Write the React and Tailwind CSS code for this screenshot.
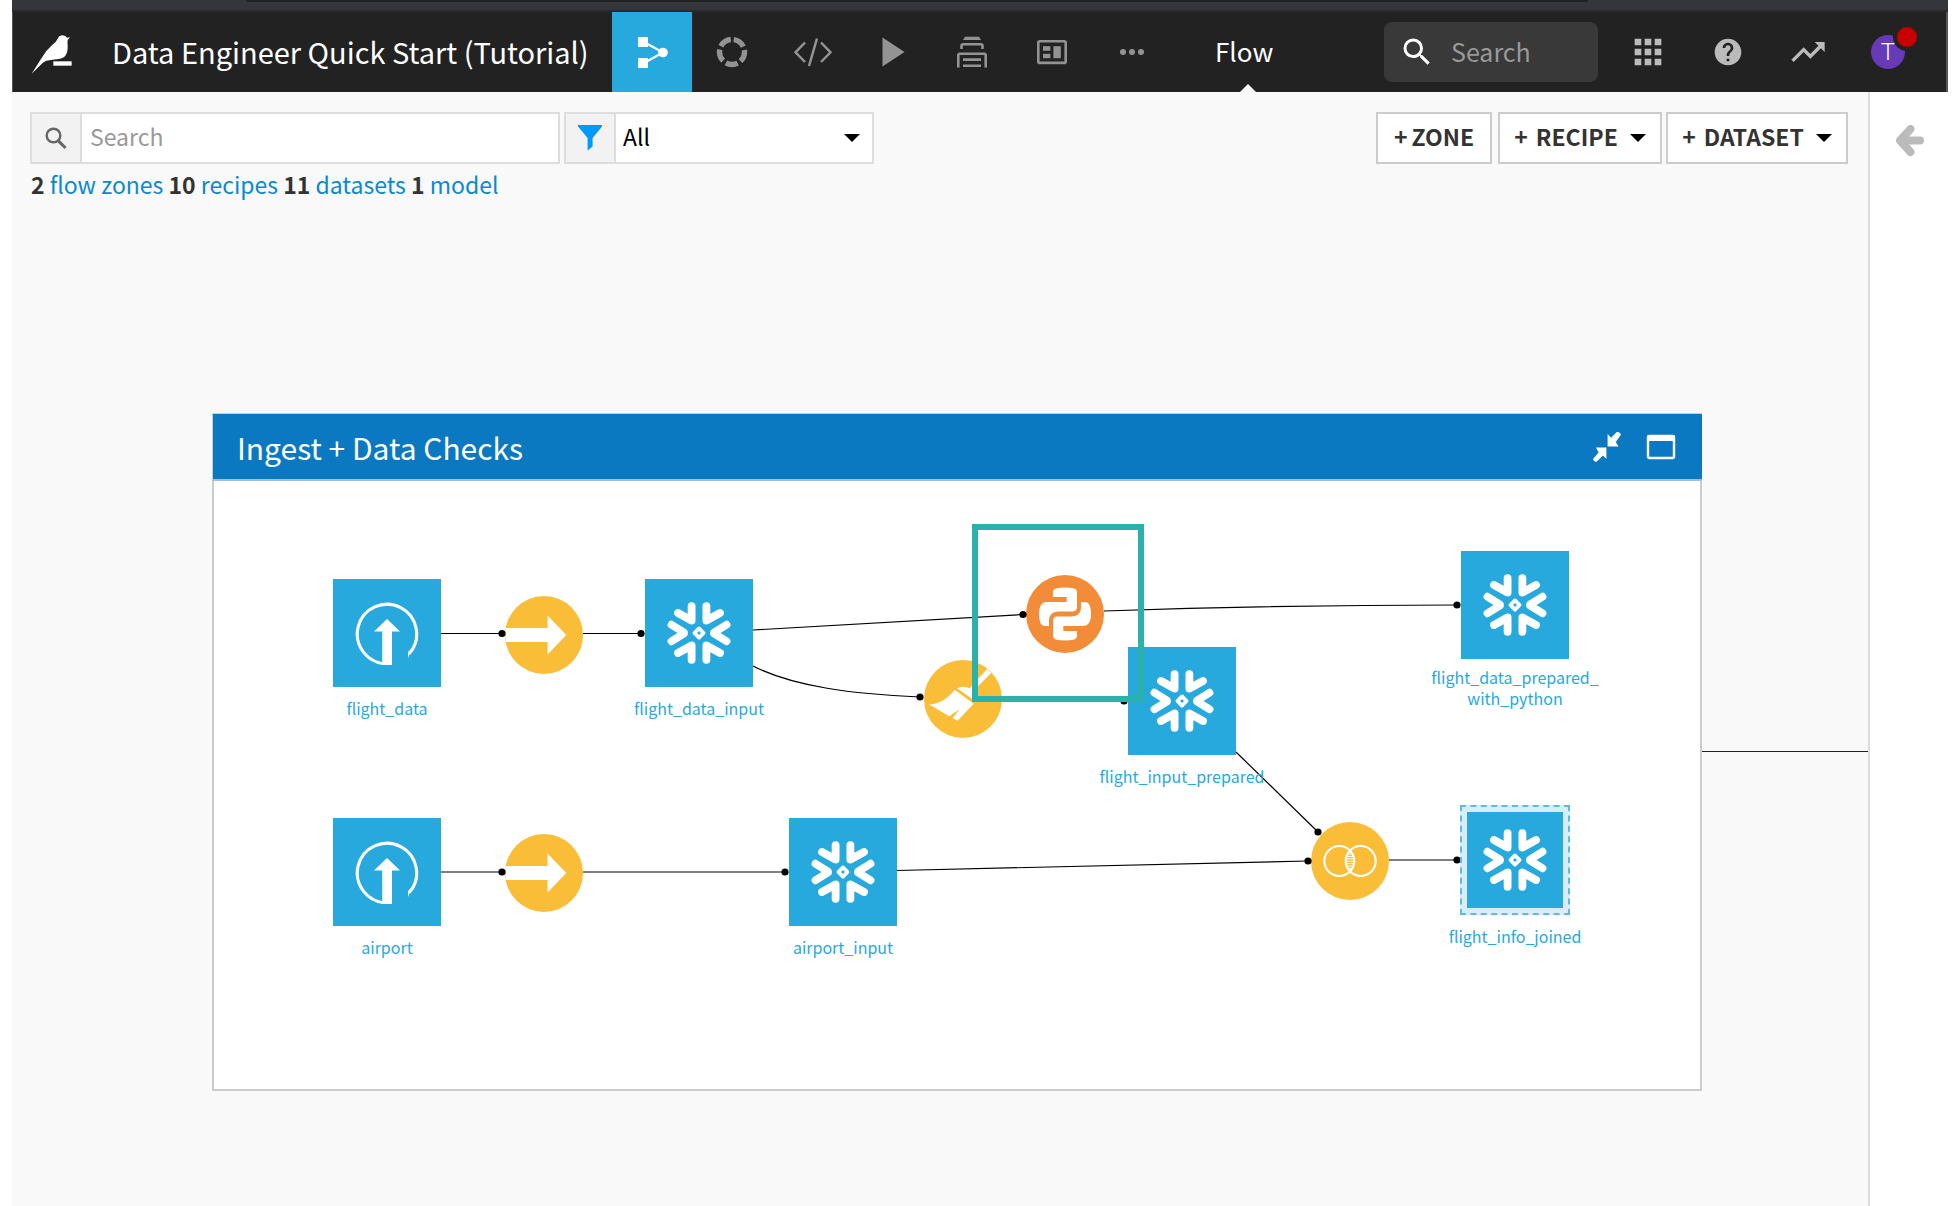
import React from 'react'
import { MdApps, MdHelp, MdSearch, MdTrendingUp } from 'react-icons/md'

const FlowIcon = () => (
  <svg width="32" height="32" viewBox="-16 -16 32 32" fill="currentColor">
    <rect x="-14" y="-15" width="10" height="10" />
    <rect x="-14" y="6" width="10" height="10" />
    <circle cx="11" cy="0.5" r="4.8" />
    <path d="M-8 -10 L11 0.5 L-8 11" fill="none" stroke="currentColor" strokeWidth="2.2" />
  </svg>
)

const LabIcon = () => (
  <svg width="32" height="32" viewBox="-16 -16 32 32" fill="none">
    <circle
      r="12.5"
      stroke="currentColor"
      strokeWidth="5.4"
      strokeDasharray="12.2 3.508"
      strokeDashoffset="-1.75"
      transform="rotate(-90)"
    />
  </svg>
)

const CodeIcon = () => (
  <svg width="40" height="32" viewBox="-20 -16 40 32" fill="none" stroke="currentColor" strokeWidth="2.5">
    <path d="M-7 -9.5 L-16.5 0.3 L-7 10 M9 -9.5 L18.5 0.3 L9 10 M5 -13.5 L-3 14" />
  </svg>
)

const PlayIcon = () => (
  <svg width="32" height="32" viewBox="-16 -16 32 32" fill="currentColor">
    <path d="M-9.5 -14.5 L12.5 0 L-9.5 14.5 Z" />
  </svg>
)

const JobsIcon = () => (
  <svg width="32" height="32" viewBox="-16 -16 32 32" fill="none" stroke="currentColor" strokeWidth="2.6">
    <path d="M-9 -12 L-7 -15.2 H7 L9 -12 Z" fill="currentColor" stroke="none" />
    <path d="M-10.5 -3 V-6 Q-10.5 -7.7 -8.8 -7.7 H8.8 Q10.5 -7.7 10.5 -6 V-3" />
    <path d="M-13.7 15.5 V3 Q-13.7 1.7 -12.4 1.7 H12.4 Q13.7 1.7 13.7 3 V15.5" />
    <path d="M-9 7.6 H9 M-9 13.8 H9" />
  </svg>
)

const DashboardIcon = () => (
  <svg width="32" height="32" viewBox="-16 -16 32 32" fill="currentColor">
    <rect x="-13.7" y="-10.7" width="27.4" height="21.6" rx="1.5" fill="none" stroke="currentColor" strokeWidth="2.6" />
    <rect x="-9" y="-5.8" width="7.4" height="4.6" />
    <rect x="-9" y="1.8" width="7.4" height="4.4" />
    <rect x="1.4" y="-5.8" width="7.4" height="12" />
  </svg>
)

const MoreIcon = () => (
  <svg width="32" height="32" viewBox="-16 -16 32 32" fill="currentColor">
    <circle cx="-9" r="3" />
    <circle r="3" />
    <circle cx="9" r="3" />
  </svg>
)

const Caret = () => (
  <svg width="16" height="8" viewBox="0 0 16 8" fill="black">
    <path d="M0 0 H16 L8 8 Z" />
  </svg>
)

const BirdLogo = () => (
  <svg width="42" height="42" viewBox="64 44 126 126" fill="white">
    <path d="M66 163 L92 122 L110 95 L128 76 Q140 68 144 58 Q149 48 159 48 Q168 49 172 55 L181 54 L174 62 Q173 67 174 80 Q175 99 166 111 Q156 121 128 121 L110 124 Q102 127 98 132 Z" />
    <rect x="131" y="126" width="55" height="13" />
  </svg>
)

const SnowflakeIcon = () => (
  <svg width="64" height="64" viewBox="-32 -32 64 64" fill="none" stroke="white" strokeLinecap="round" strokeLinejoin="round">
    <g strokeWidth="7.8">
      <path d="M27.5 -8.3 L15 -0.5 V0.5 L27.5 8.3" />
      <path d="M-27.5 -8.3 L-15 -0.5 V0.5 L-27.5 8.3" />
      <path d="M7.4 -26.8 V-12.5 L21 -20" />
      <path d="M-7.4 -26.8 V-12.5 L-21 -20" />
      <path d="M7.4 26.8 V12.5 L21 20" />
      <path d="M-7.4 26.8 V12.5 L-21 20" />
    </g>
    <path d="M0 -4.6 L4.6 0 L0 4.6 L-4.6 0 Z" strokeWidth="3.8" />
  </svg>
)

const UploadIcon = () => (
  <svg width="64" height="64" viewBox="-32 -33 64 64">
    <path d="M22.3 19.6 A29.7 29.7 0 1 0 0 29.7" fill="none" stroke="white" strokeWidth="3.1" />
    <path d="M21 24 V18 L25 15 Z M-4.8 31.2 V-2.6 H-13 L0 -15 L13 -2.6 H5 V31 Z" fill="white" />
  </svg>
)

const SyncGlyph = () => (
  <path d="M-38.4 -7 H3.6 V-19.5 L22.3 0 L3.6 19.5 V7 H-38.4 Z" fill="white" />
)

const PYTHON_HALF =
  'M-12 -17 V-22 Q-12 -24.6 -9.3 -25.4 Q0 -27.4 9.3 -25.4 Q12 -24.6 12 -22 V-7 Q12 -2.6 7.5 -2.6 H-6.8 Q-16 -2 -16 6.5 V12 H-20.7 Q-26 11.6 -26 0 Q-26 -12 -18 -12 H1.7 V-17 Z'

const PythonGlyph = () => (
  <g fill="white">
    <path d={PYTHON_HALF} />
    <path d={PYTHON_HALF} transform="rotate(180)" />
  </g>
)

const BroomGlyph = () => (
  <g fill="white" transform="scale(0.3333) translate(-250 -598)">
    <path d="M225 570 L282 612 L234 663 L219 655 L240 628 L209 650 L147 614 Q190 614 225 570 Z" />
    <path d="M232 566 Q250 556 270 566 L322 508 L335 519 L289 566 Q298 584 290 606 Z" />
  </g>
)

const JoinGlyph = () => (
  <g fill="none" stroke="white" strokeWidth="2.1">
    <circle cx="-10.7" r="15" />
    <circle cx="10.7" r="15" />
    <path
      strokeWidth="1"
      d="M-2.5 -7 H2.5 M-3.6 -4.6 H3.6 M-4 -2.2 H4 M-4 0.2 H4 M-4 2.6 H4 M-3.6 5 H3.6 M-2.5 7.4 H2.5"
    />
  </g>
)

const navItems = [
  { label: 'Flow', icon: <FlowIcon />, active: true },
  { label: 'Visual analyses', icon: <LabIcon /> },
  { label: 'Notebooks', icon: <CodeIcon /> },
  { label: 'Jobs', icon: <PlayIcon /> },
  { label: 'Scenarios', icon: <JobsIcon /> },
  { label: 'Dashboards', icon: <DashboardIcon /> },
  { label: 'More', icon: <MoreIcon /> },
]

// Positions are the top left corner of each square, in canvas pixels
const datasets = [
  { name: ['flight_data'], x: 119, y: 98, kind: 'upload' },
  { name: ['flight_data_input'], x: 431, y: 98, kind: 'snowflake' },
  { name: ['flight_input_prepared'], x: 914, y: 166, kind: 'snowflake' },
  { name: ['flight_data_prepared_', 'with_python'], x: 1247, y: 70, kind: 'snowflake' },
  { name: ['airport'], x: 119, y: 337, kind: 'upload' },
  { name: ['airport_input'], x: 575, y: 337, kind: 'snowflake' },
  { name: ['flight_info_joined'], x: 1247, y: 324, kind: 'snowflake', shared: true },
]

// Positions are circle centers, in canvas pixels
const recipes = [
  { name: 'Sync flight_data', x: 330, y: 154, fill: '#f9bd38', glyph: <SyncGlyph /> },
  { name: 'Sync airport', x: 330, y: 392, fill: '#f9bd38', glyph: <SyncGlyph /> },
  { name: 'Prepare', x: 749, y: 218, fill: '#f9bd38', glyph: <BroomGlyph /> },
  { name: 'Python', x: 851, y: 133, fill: '#f28c38', glyph: <PythonGlyph /> },
  { name: 'Join', x: 1136, y: 380, fill: '#f9bd38', glyph: <JoinGlyph /> },
]

const edges = [
  { d: 'M227 152.5 H288', dot: [288, 152.5] },
  { d: 'M369 152.5 H426', dot: [427, 152.5] },
  { d: 'M539 149 L809 133.5', dot: [809, 133.5] },
  { d: 'M539 185 C580 206 640 213 706 216', dot: [706, 216] },
  { d: 'M788 219.5 H909', dot: [910, 220] },
  { d: 'M890 130 C1010 126 1130 124 1243 124', dot: [1243, 124] },
  { d: 'M1022 271 L1104 351', dot: [1104, 351] },
  { d: 'M227 391 H288', dot: [288, 391] },
  { d: 'M369 391 H571', dot: [571, 391] },
  { d: 'M683 389.5 L1094 380', dot: [1094, 380] },
  { d: 'M1175 379 H1243', dot: [1243, 379] },
]

const NavButton = ({ label, icon, active }) => (
  <button
    aria-label={label}
    className={`flex w-20 items-center justify-center ${active ? 'bg-[#28a9dd] text-white' : 'text-[#939393]'}`}
  >
    {icon}
  </button>
)

const HeaderButton = ({ label, children }) => (
  <button aria-label={label} className="flex w-20 items-center justify-center text-[#bbbbbb]">
    {children}
  </button>
)

const Header = () => (
  <header className="flex h-20 border-l border-r-2 border-[#555555] bg-[#222222] pr-[18px] text-white">
    <a href="#home" aria-label="Home" className="flex items-center pl-[18px] pt-[6px]">
      <BirdLogo />
    </a>
    <h1 className="flex w-[539px] items-center whitespace-nowrap pb-[2px] pl-[39px] text-[29px] leading-none">
      Data Engineer Quick Start (Tutorial)
    </h1>
    <nav className="flex">
      {navItems.map((item) => (
        <NavButton key={item.label} {...item} />
      ))}
    </nav>
    <div className="relative ml-[43px] flex items-center pb-[2px] text-[26px] leading-none">
      <span>Flow</span>
      <svg className="absolute bottom-0 left-[25px]" width="16" height="8" viewBox="0 0 16 8" fill="#f9f9f9">
        <path d="M0 8 L8 0 L16 8 Z" />
      </svg>
    </div>
    <div className="my-[10px] ml-auto flex w-[214px] items-center rounded-lg bg-[#393939] pl-[15px]">
      <MdSearch size={36} />
      <input
        type="text"
        aria-label="Search DSS"
        placeholder="Search"
        className="ml-4 w-32 bg-transparent pb-[2px] text-[25px] leading-none outline-none placeholder:text-[#999999]"
      />
    </div>
    <div className="ml-[10px] flex">
      <HeaderButton label="Applications"><MdApps size={40} /></HeaderButton>
      <HeaderButton label="Help"><MdHelp size={32} /></HeaderButton>
      <HeaderButton label="Activity"><MdTrendingUp size={40} /></HeaderButton>
      <HeaderButton label="Profile">
        <span className="relative flex size-[34px] items-center justify-center rounded-full bg-[#673ab7] font-[Roboto] text-[24px] font-light text-white">
          T
          <span className="absolute -right-4 -top-3 size-7 rounded-full border-4 border-[#222222] bg-[#c80000]" />
        </span>
      </HeaderButton>
    </div>
  </header>
)

const Toolbar = () => (
  <div className="flex h-[52px] items-stretch text-[23px] leading-none">
    <label className="flex w-[530px] border-2 border-[#dddddd] bg-white">
      <span className="flex w-[50px] items-center justify-center border-r-2 border-[#dddddd] bg-[#f2f2f2]">
        <svg width="24" height="24" viewBox="0 0 24 24" fill="none" stroke="#666666">
          <circle cx="9.5" cy="9.5" r="6.8" strokeWidth="2.4" />
          <path d="M14.2 14.6 L21.5 22" strokeWidth="3" />
        </svg>
      </span>
      <input
        type="text"
        aria-label="Search the flow"
        placeholder="Search"
        className="min-w-0 flex-1 pb-1 pl-2 outline-none placeholder:text-[#999999]"
      />
    </label>
    <div className="ml-1 flex w-[310px] border-2 border-[#dddddd] bg-white">
      <span className="flex w-[50px] items-center justify-center border-r-2 border-[#dddddd] bg-[#f2f2f2]">
        <svg width="24" height="26" viewBox="0 0 24 26" fill="#0099ff">
          <path d="M0 0 H24 V1.6 L14.6 13 V21.5 L9.6 25.5 V13 L0 1.6 Z" />
        </svg>
      </span>
      <div className="relative flex flex-1 items-center">
        <select aria-label="Filter" className="h-full w-full appearance-none pb-1 pl-[7px] text-black outline-none">
          <option>All</option>
        </select>
        <span className="pointer-events-none absolute right-3">
          <Caret />
        </span>
      </div>
    </div>
    <div className="ml-auto flex font-bold text-[#333333]">
      <button className="flex w-[116px] items-center justify-center gap-1 border-2 border-[#cccccc] bg-white pb-1">
        <span>+</span>ZONE
      </button>
      <button className="ml-[6px] flex w-[164px] items-center justify-center gap-2 border-2 border-[#cccccc] bg-white">
        <span className="flex gap-2 pb-1"><span>+</span>RECIPE</span>
        <span className="ml-1"><Caret /></span>
      </button>
      <button className="ml-1 flex w-[182px] items-center justify-center gap-2 border-2 border-[#cccccc] bg-white">
        <span className="flex gap-2 pb-1"><span>+</span>DATASET</span>
        <span className="ml-1"><Caret /></span>
      </button>
    </div>
  </div>
)

const Count = ({ value, label }) => (
  <>
    <b className="text-[#333333]">{value}</b>{' '}
    <a href={`#${label.replace(' ', '-')}`}>{label}</a>{' '}
  </>
)

const Dataset = ({ name, x, y, kind, shared }) => (
  <div className="absolute flex w-[108px] flex-col items-center" style={{ left: x, top: y }}>
    <div
      className={`flex shrink-0 items-center justify-center ${
        shared ? 'size-[110px] border-2 border-dashed border-[#5bbbe4] bg-[#d9edf8] p-[5px]' : 'size-[108px] bg-[#28a9dd]'
      }`}
    >
      <div className="flex size-full items-center justify-center bg-[#28a9dd]">
        {kind === 'upload' ? <UploadIcon /> : <SnowflakeIcon />}
      </div>
    </div>
    <div
      className={`whitespace-nowrap text-center text-[16px] leading-[21px] text-[#28a9dd] ${
        name.length > 1 ? 'mt-2' : 'mt-[11px]'
      }`}
    >
      {name.map((line) => (
        <div key={line}>{line}</div>
      ))}
    </div>
  </div>
)

const Zone = () => (
  <section className="min-w-0 flex-1">
    <div className="flex h-[68px] items-center border-b-2 border-l border-t border-[#cccccc] border-b-[#a9bdd2] bg-[#0b79c1] pl-6 pr-[26px] text-white">
      <h2 className="text-[30px] leading-none">Ingest + Data Checks</h2>
      <button aria-label="Collapse" className="ml-auto">
        <svg width="30" height="30" viewBox="-15 -15 30 30" fill="white">
          <path d="M0.6 -0.6 V-13 L4 -9.2 L9.5 -14.8 Q11 -15.4 13 -14 L14 -12.5 L8.8 -5 L11.5 -0.6 Z" />
          <path d="M-0.6 0.6 V12 L-4 8.6 L-10.5 14.8 Q-12 15 -13.4 13.6 L-14 12 L-8.4 5.4 L-11 0.6 Z" />
        </svg>
      </button>
      <button aria-label="Open zone" className="ml-6">
        <svg width="30" height="26" viewBox="0 0 30 26">
          <rect x="2" y="2" width="26" height="22" rx="1.5" fill="none" stroke="white" strokeWidth="2.4" />
          <rect x="1" y="1" width="28" height="6" rx="1.5" fill="white" />
        </svg>
      </button>
    </div>
    <div className="relative h-[610px] border-x-2 border-b-2 border-[#cccccc] bg-white">
      <svg className="absolute left-0 top-0" width="1486" height="608" viewBox="0 0 1486 608">
        {edges.map(({ d }) => (
          <path key={d} d={d} fill="none" stroke="black" strokeWidth="1.2" />
        ))}
        {recipes.map(({ name, x, y, fill, glyph }) => (
          <g key={name} transform={`translate(${x} ${y})`}>
            <circle r="39" fill={fill} />
            {glyph}
          </g>
        ))}
        {edges.map(({ d, dot }) => (
          <circle key={d} cx={dot[0]} cy={dot[1]} r="3.6" />
        ))}
      </svg>
      {datasets.map((dataset) => (
        <Dataset key={dataset.name[0]} {...dataset} />
      ))}
      <div className="absolute left-[758px] top-[43px] h-[178px] w-[172px] border-6 border-[#2ab1ac]" />
    </div>
  </section>
)

const App = () => (
  <div className="flex min-h-screen flex-col bg-white pl-3 pr-2 font-['Noto_Sans_CJK_SC',sans-serif]">
    {/* bottom edge of the browser's address bar */}
    <div className="h-3 border-b-2 border-[#292929] bg-[#35363a] pl-[234px] pr-[360px]">
      <div className="h-[2px] rounded-b-lg bg-[#202124]" />
    </div>
    <Header />
    <div className="flex flex-1">
      <main className="flex min-w-0 flex-1 flex-col bg-[#f9f9f9]">
        <div className="pl-[18px] pr-5 pt-5">
          <Toolbar />
          <p className="mt-[2px] pl-px text-[23px] leading-9 text-[#0a8acb]">
            <Count value="2" label="flow zones" />
            <Count value="10" label="recipes" />
            <Count value="11" label="datasets" />
            <Count value="1" label="model" />
          </p>
        </div>
        <div className="mt-[211px] flex pl-[200px]">
          <Zone />
          <div className="mt-[338px] h-px w-[166px] bg-[#222222]" />
        </div>
      </main>
      <aside className="w-20 border-l-2 border-[#dddddd] bg-white pt-8">
        <button aria-label="Open panel" className="mx-auto block">
          <svg width="32" height="34" viewBox="0 0 32 34" fill="none" stroke="#bbbbbb" strokeWidth="8" strokeLinecap="round" strokeLinejoin="round">
            <path d="M17.5 5 L7 16.5 L17.5 28 M9 16.5 H27" />
          </svg>
        </button>
      </aside>
    </div>
  </div>
)

export default App
